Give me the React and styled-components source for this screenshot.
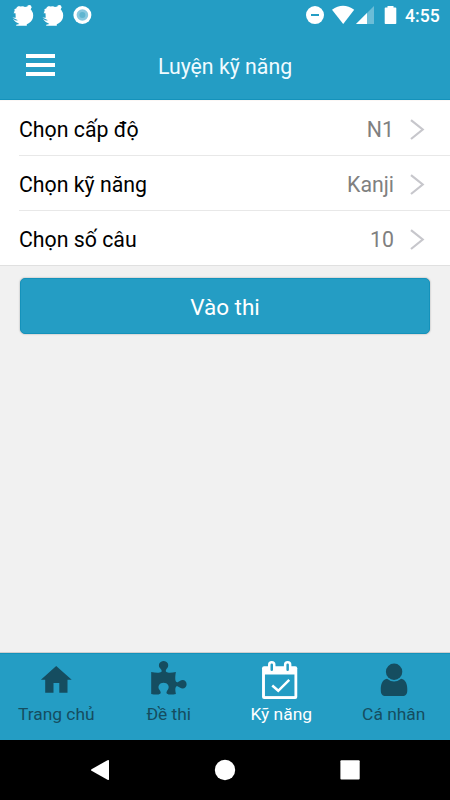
import React from "react";

import styled, { createGlobalStyle, ThemeProvider } from "styled-components";

const theme = {
  primary: "#249dc4",
  primaryDark: "#1492bb",
  inactive: "#154d60",
  background: "#f1f1f1",
  line: "#e8e8e8",
}

const GlobalStyle = createGlobalStyle`
  body {
    margin: 0;
    font-family: Roboto, "Noto Sans", sans-serif;
  }

  svg {
    display: block;
    flex: none;
  }
`

const Screen = styled.div`
  display: flex;
  flex-direction: column;
  width: 450px;
  height: 800px;
  overflow: hidden;
  background: ${pr => pr.theme.background};
`

const StatusBar = styled.div`
  display: flex;
  flex: none;
  justify-content: space-between;
  height: 30px;
  background: ${pr => pr.theme.primary};
`

const StatusGroup = styled.div`
  display: flex;
  align-items: flex-start;
`

const Clock = styled.span`
  width: 45px;
  font-size: 17.6px;
  font-weight: 500;
  line-height: 32px;
  color: #fff;
`

const Header = styled.header`
  display: grid;
  flex: none;
  grid-template-columns: 80px 1fr 80px;
  height: 70px;
  box-sizing: border-box;
  background: ${pr => pr.theme.primary};
  border-bottom: 1px solid ${pr => pr.theme.primaryDark};
`

const MenuButton = styled.button`
  display: flex;
  flex-direction: column;
  gap: 5px;
  padding: 24px 0 0 26px;
  border: 0;
  background: none;
`

const MenuLine = styled.span`
  width: 29px;
  height: 4px;
  background: #fff;
`

const Title = styled.h1`
  margin: 0;
  font-size: 21.3px;
  font-weight: 400;
  line-height: 73px;
  text-align: center;
  white-space: nowrap;
  color: #f0fbff;
`

const List = styled.div`
  flex: none;
  padding-left: 19px;
  background: #fff;
  border-top: 1px solid #fbf7f5;
  border-bottom: 1px solid #e0e0e0;
`

const ListRow = styled.div`
  display: flex;
  align-items: center;
  height: 55px;
  box-sizing: border-box;
  padding: 3px 25px 0 0;
  font-size: 21.3px;
  border-bottom: 1px solid ${pr => pr.theme.line};

  &:last-child {
    height: 54px;
    border-bottom: 0;
  }
`

const RowLabel = styled.span`
  flex: 1;
  color: #000;
`

const RowValue = styled.span`
  margin-right: 16px;
  color: #808080;
`

const Content = styled.main`
  flex: 1;
  padding: 12px 20px;
`

const StartButton = styled.button`
  width: 100%;
  height: 56px;
  padding: 2px 0 0;
  border: 1px solid ${pr => pr.theme.primaryDark};
  border-radius: 5px;
  background: ${pr => pr.theme.primary};
  box-shadow: 0 0 2px rgba(0, 0, 0, 0.35);
  font-family: inherit;
  font-size: 22.5px;
  line-height: 26px;
  color: #fff;
`

const TabBar = styled.nav`
  display: grid;
  flex: none;
  grid-template-columns: repeat(4, 1fr);
  height: 87px;
  box-sizing: border-box;
  background: ${pr => pr.theme.primary};
  border-top: 1px solid ${pr => pr.theme.primaryDark};
  box-shadow: 0 -1px 0 #cfcfcf;
`

const Tab = styled.div`
  display: flex;
  flex-direction: column;
  align-items: center;
  padding-top: 6px;
  font-size: 17.4px;
  line-height: 22px;
  white-space: nowrap;
  color: ${pr => (pr.$active ? "#fff" : pr.theme.inactive)};

  svg {
    margin-bottom: 3px;
  }
`

const SystemBar = styled.div`
  display: flex;
  flex: none;
  align-items: center;
  justify-content: space-between;
  height: 60px;
  box-sizing: border-box;
  padding: 0 90px;
  background: #000;
`

const StatusIconsLeft = () => (
  <svg width="100" height="30" viewBox="0 0 100 30" fill="#fff">
    <defs>
      <g id="mascot">
        <path d="M17 7l2-1 1 .6 3-.4 2 .8 2.200-.4q6 3.400 6 9 0 5-4.500 7.600l-1.900 1v1.600H16.200v-1l3.200-.8-1.700-1-2-1-2.900-3 3.200 1.400 2-.2-2.600-1.200-3-1.600 3.300.4-.2-4.600-2 .1 1.200-1.700-1-.3 1.500-1.400-1.200-.6 2.200-.9z" />
        <circle cx="29.300" cy="7.200" r="2.200" />
      </g>
    </defs>
    <use href="#mascot" />
    <use href="#mascot" x="30" />
    <circle cx="82.400" cy="15" r="9" />
    <circle cx="82.400" cy="15" r="5.800" fill="#88c8df" />
    <circle cx="82.400" cy="15" r="3" fill="#5fb5d0" />
  </svg>
)

const StatusIconsRight = () => (
  <svg width="101" height="30" viewBox="304 0 101 30" fill="#fff">
    <circle cx="315" cy="15.100" r="9" />
    <path d="M311 14h8v2h-8z" fill="#249dc4" />
    <path d="M332 9.800Q343 1.800 354.200 9.800L343.200 24z" />
    <path d="M374 6v18h-18z" fill="#6cbdd7" />
    <path d="M367 13v11h-11z" />
    <path d="M387.500 6h6v1.500h2q.8 0 .8.8v15q0 .8-.8.8h-10q-.8 0-.8-.8v-15q0-.8.8-.8h2z" />
  </svg>
)

const Chevron = () => (
  <svg width="15" height="22" viewBox="0 0 15 22" fill="none" stroke="#c7c7cc" strokeWidth="2.200">
    <path d="M1 1.200l11.700 9.300L1 20" />
  </svg>
)

const HomeIcon = () => (
  <svg width="36" height="40" viewBox="38 660 36 40" fill="currentColor">
    <path d="M56.200 666l15.500 13.800h-4.200v13h-8.200v-9.800h-5.800v9.800h-8.300v-13h-4.300z" />
  </svg>
)

const PuzzleIcon = () => (
  <svg width="36" height="40" viewBox="150.800 660 36 40" fill="currentColor">
    <path d="M151 672c4 .8 8.500 1 10 0 1.400-1-.2-2.600-1.300-4-2.300-3.200-.2-7.100 3.700-7.100s6 3.900 3.700 7.100c-1.100 1.400-2.400 3-.9 4 1.400 1 5.500.8 9.500 0-.8 4-.9 8.500.2 9.700 1 1.100 2.300.1 3.600-.8 3.600-2.200 6.900-.1 6.900 3.300s-3.300 5.500-6.900 3.300c-1.300-.8-2.700-1.800-3.700-.8-1.100 1.200-.7 4.300-.1 7.300-3.500.7-7.500.8-8.900-.3-1.200-1-.2-2.600.8-4 2.400-3.400-.3-6.900-4.200-6.900s-6.600 3.500-4.200 6.900c1 1.400 2 3 .8 4-1.400 1.100-5.500 1-9 .3z" />
  </svg>
)

const CalendarIcon = () => (
  <svg width="40" height="40" viewBox="261.250 660 40 40">
    <path d="M264.300 666.300h31.200q2 0 2 2v28.600q0 2-2 2h-31.200q-2 0-2-2v-28.600q0-2 2-2z" fill="#fff" />
    <path d="M265.200 674.500h29.500v21.600h-29.500z" fill="#249dc4" />
    <rect x="269.500" y="662.300" width="5" height="10" rx="2.500" fill="#249dc4" stroke="#fff" strokeWidth="2.500" />
    <rect x="285.400" y="662.300" width="5" height="10" rx="2.500" fill="#249dc4" stroke="#fff" strokeWidth="2.500" />
    <path d="M272.500 685.500l6 5.300 11-11" fill="none" stroke="#fff" strokeWidth="2.500" />
  </svg>
)

const PersonIcon = () => (
  <svg width="36" height="40" viewBox="375.800 660 36 40" fill="currentColor">
    <circle cx="393.900" cy="671.800" r="8.200" />
    <path d="M386.800 678.700q7 5.600 14.200 0c4.500.8 6.300 5.500 6.100 11.300 0 4-1.500 6-5 6h-16.500c-3.500 0-5-2-5-6-.1-6 1.700-10.500 6.200-11.300z" />
  </svg>
)

const rows = [
  { label: "Chọn cấp độ", value: "N1" },
  { label: "Chọn kỹ năng", value: "Kanji" },
  { label: "Chọn số câu", value: "10" },
]

const tabs = [
  { label: "Trang chủ", Icon: HomeIcon },
  { label: "Đề thi", Icon: PuzzleIcon },
  { label: "Kỹ năng", Icon: CalendarIcon, active: true },
  { label: "Cá nhân", Icon: PersonIcon },
]

const App = () => {
  return (
    <ThemeProvider theme={theme}>
      <GlobalStyle />
      <Screen>
        <StatusBar>
          <StatusGroup>
            <StatusIconsLeft />
          </StatusGroup>
          <StatusGroup>
            <StatusIconsRight />
            <Clock>4:55</Clock>
          </StatusGroup>
        </StatusBar>
        <Header>
          <MenuButton>
            <MenuLine />
            <MenuLine />
            <MenuLine />
          </MenuButton>
          <Title>Luyện kỹ năng</Title>
        </Header>
        <List>
          {rows.map(row => (
            <ListRow key={row.label}>
              <RowLabel>{row.label}</RowLabel>
              <RowValue>{row.value}</RowValue>
              <Chevron />
            </ListRow>
          ))}
        </List>
        <Content>
          <StartButton>Vào thi</StartButton>
        </Content>
        <TabBar>
          {tabs.map(({ label, Icon, active }) => (
            <Tab key={label} $active={active}>
              <Icon />
              {label}
            </Tab>
          ))}
        </TabBar>
        <SystemBar>
          <svg width="20" height="22" viewBox="0 0 20 22" fill="#fff">
            <path d="M17.500 1.200q1.500-.8 1.500.5v18.600q0 1.300-1.500.5L1.500 11.800q-1-.8 0-1.600z" />
          </svg>
          <svg width="22" height="22" viewBox="0 0 22 22" fill="#fff">
            <circle cx="11" cy="11" r="10.200" />
          </svg>
          <svg width="20" height="22" viewBox="0 0 20 22" fill="#fff">
            <rect x=".4" y="1.300" width="19.300" height="19.300" rx="1" />
          </svg>
        </SystemBar>
      </Screen>
    </ThemeProvider>
  );
}

export default App;
